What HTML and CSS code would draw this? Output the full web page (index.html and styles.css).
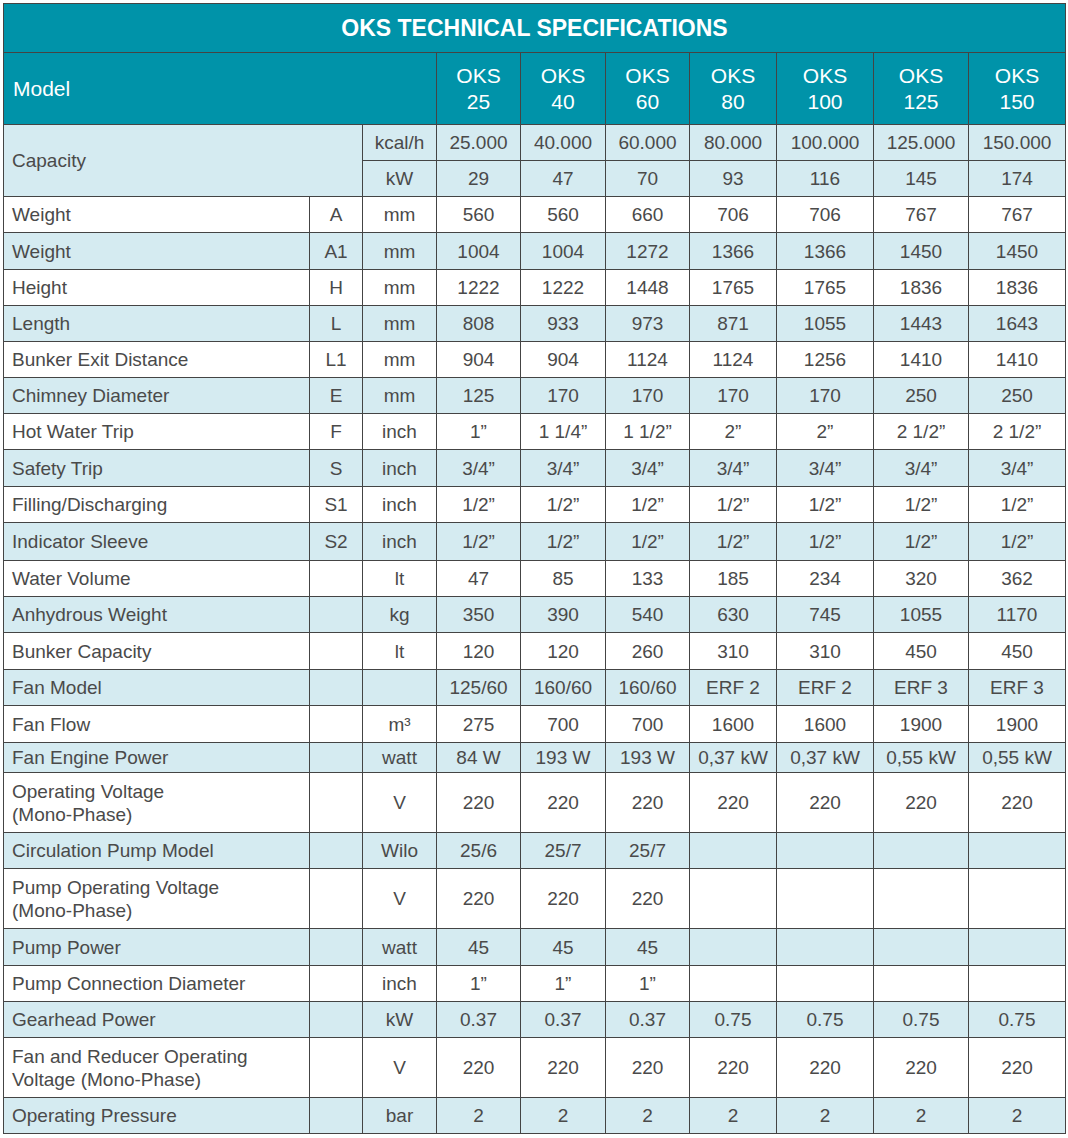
FILE: index.html
```html
<!DOCTYPE html>
<html>
<head>
<meta charset="utf-8">
<link rel="stylesheet" href="styles.css">
</head>
<body>
<table class="spec">
<colgroup>
<col class="c-label"><col class="c-letter"><col class="c-unit">
<col class="c-v1"><col class="c-v2"><col class="c-v3"><col class="c-v4"><col class="c-v5"><col class="c-v6"><col class="c-v7">
</colgroup>
<thead>
<tr class="h49"><th colspan="10" class="title">OKS TECHNICAL SPECIFICATIONS</th></tr>
<tr class="h72 model"><th colspan="3" class="model-label">Model</th><th>OKS<br>25</th><th>OKS<br>40</th><th>OKS<br>60</th><th>OKS<br>80</th><th>OKS<br>100</th><th>OKS<br>125</th><th>OKS<br>150</th></tr>
</thead>
<tbody>
<tr class="h36 alt"><td colspan="2" rowspan="2" class="label">Capacity</td><td>kcal/h</td><td>25.000</td><td>40.000</td><td>60.000</td><td>80.000</td><td>100.000</td><td>125.000</td><td>150.000</td></tr>
<tr class="h36 alt"><td>kW</td><td>29</td><td>47</td><td>70</td><td>93</td><td>116</td><td>145</td><td>174</td></tr>
<tr class="h36"><td class="label">Weight</td><td>A</td><td>mm</td><td>560</td><td>560</td><td>660</td><td>706</td><td>706</td><td>767</td><td>767</td></tr>
<tr class="h37 alt"><td class="label">Weight</td><td>A1</td><td>mm</td><td>1004</td><td>1004</td><td>1272</td><td>1366</td><td>1366</td><td>1450</td><td>1450</td></tr>
<tr class="h36"><td class="label">Height</td><td>H</td><td>mm</td><td>1222</td><td>1222</td><td>1448</td><td>1765</td><td>1765</td><td>1836</td><td>1836</td></tr>
<tr class="h36 alt"><td class="label">Length</td><td>L</td><td>mm</td><td>808</td><td>933</td><td>973</td><td>871</td><td>1055</td><td>1443</td><td>1643</td></tr>
<tr class="h36"><td class="label">Bunker Exit Distance</td><td>L1</td><td>mm</td><td>904</td><td>904</td><td>1124</td><td>1124</td><td>1256</td><td>1410</td><td>1410</td></tr>
<tr class="h36 alt"><td class="label">Chimney Diameter</td><td>E</td><td>mm</td><td>125</td><td>170</td><td>170</td><td>170</td><td>170</td><td>250</td><td>250</td></tr>
<tr class="h36"><td class="label">Hot Water Trip</td><td>F</td><td>inch</td><td>1”</td><td>1 1/4”</td><td>1 1/2”</td><td>2”</td><td>2”</td><td>2 1/2”</td><td>2 1/2”</td></tr>
<tr class="h37 alt"><td class="label">Safety Trip</td><td>S</td><td>inch</td><td>3/4”</td><td>3/4”</td><td>3/4”</td><td>3/4”</td><td>3/4”</td><td>3/4”</td><td>3/4”</td></tr>
<tr class="h36"><td class="label">Filling/Discharging</td><td>S1</td><td>inch</td><td>1/2”</td><td>1/2”</td><td>1/2”</td><td>1/2”</td><td>1/2”</td><td>1/2”</td><td>1/2”</td></tr>
<tr class="h38 alt"><td class="label">Indicator Sleeve</td><td>S2</td><td>inch</td><td>1/2”</td><td>1/2”</td><td>1/2”</td><td>1/2”</td><td>1/2”</td><td>1/2”</td><td>1/2”</td></tr>
<tr class="h36"><td class="label">Water Volume</td><td></td><td>lt</td><td>47</td><td>85</td><td>133</td><td>185</td><td>234</td><td>320</td><td>362</td></tr>
<tr class="h36 alt"><td class="label">Anhydrous Weight</td><td></td><td>kg</td><td>350</td><td>390</td><td>540</td><td>630</td><td>745</td><td>1055</td><td>1170</td></tr>
<tr class="h37"><td class="label">Bunker Capacity</td><td></td><td>lt</td><td>120</td><td>120</td><td>260</td><td>310</td><td>310</td><td>450</td><td>450</td></tr>
<tr class="h36 alt"><td class="label">Fan Model</td><td></td><td></td><td>125/60</td><td>160/60</td><td>160/60</td><td>ERF 2</td><td>ERF 2</td><td>ERF 3</td><td>ERF 3</td></tr>
<tr class="h37"><td class="label">Fan Flow</td><td></td><td>m³</td><td>275</td><td>700</td><td>700</td><td>1600</td><td>1600</td><td>1900</td><td>1900</td></tr>
<tr class="h30 alt"><td class="label">Fan Engine Power</td><td></td><td>watt</td><td>84 W</td><td>193 W</td><td>193 W</td><td>0,37 kW</td><td>0,37 kW</td><td>0,55 kW</td><td>0,55 kW</td></tr>
<tr class="h60"><td class="label">Operating Voltage<br>(Mono-Phase)</td><td></td><td>V</td><td>220</td><td>220</td><td>220</td><td>220</td><td>220</td><td>220</td><td>220</td></tr>
<tr class="h36 alt"><td class="label">Circulation Pump Model</td><td></td><td>Wilo</td><td>25/6</td><td>25/7</td><td>25/7</td><td></td><td></td><td></td><td></td></tr>
<tr class="h60"><td class="label">Pump Operating Voltage<br>(Mono-Phase)</td><td></td><td>V</td><td>220</td><td>220</td><td>220</td><td></td><td></td><td></td><td></td></tr>
<tr class="h37 alt"><td class="label">Pump Power</td><td></td><td>watt</td><td>45</td><td>45</td><td>45</td><td></td><td></td><td></td><td></td></tr>
<tr class="h36"><td class="label">Pump Connection Diameter</td><td></td><td>inch</td><td>1”</td><td>1”</td><td>1”</td><td></td><td></td><td></td><td></td></tr>
<tr class="h36 alt"><td class="label">Gearhead Power</td><td></td><td>kW</td><td>0.37</td><td>0.37</td><td>0.37</td><td>0.75</td><td>0.75</td><td>0.75</td><td>0.75</td></tr>
<tr class="h60"><td class="label">Fan and Reducer Operating Voltage (Mono-Phase)</td><td></td><td>V</td><td>220</td><td>220</td><td>220</td><td>220</td><td>220</td><td>220</td><td>220</td></tr>
<tr class="h36 alt"><td class="label">Operating Pressure</td><td></td><td>bar</td><td>2</td><td>2</td><td>2</td><td>2</td><td>2</td><td>2</td><td>2</td></tr>
</tbody>
</table>
</body>
</html>
```
FILE: styles.css
```css
html, body {
  margin: 0;
  padding: 0;
  background: #ffffff;
}
body {
  padding: 3px;
  font-family: "Liberation Sans", Arial, sans-serif;
}
.spec {
  border-collapse: collapse;
  table-layout: fixed;
  width: 1063px;
  color: #4a4a4a;
  font-size: 19px;
}
.c-label { width: 306px; }
.c-letter { width: 53px; }
.c-unit { width: 74px; }
.c-v1 { width: 84px; }
.c-v2 { width: 85px; }
.c-v3 { width: 84px; }
.c-v4 { width: 87px; }
.c-v5 { width: 97px; }
.c-v6 { width: 95px; }
.c-v7 { width: 97px; }
.spec th, .spec td {
  border: 1px solid #444444;
  padding: 0;
  text-align: center;
  vertical-align: middle;
  line-height: 23px;
  overflow: hidden;
  white-space: nowrap;
}
.spec thead th {
  background: #0093a9;
  color: #ffffff;
  font-weight: normal;
  font-size: 21px;
  line-height: 26px;
}
.spec thead th.title {
  font-weight: bold;
  font-size: 23px;
}
.spec thead th.model-label {
  text-align: left;
  padding-left: 9px;
}
.spec td.label {
  text-align: left;
  padding-left: 8px;
  white-space: normal;
}
.alt td { background: #d5ebf1; }
.h30 { height: 30px; }
.h36 { height: 36px; }
.h37 { height: 37px; }
.h38 { height: 38px; }
.h49 { height: 49px; }
.h60 { height: 60px; }
.h72 { height: 72px; }
```
